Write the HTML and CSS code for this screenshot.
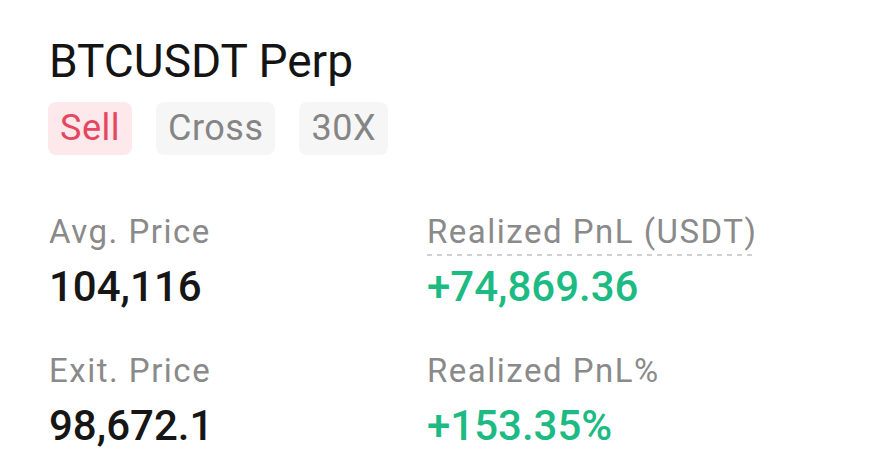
FILE: index.html
```html
<!DOCTYPE html>
<html>
<head>
<meta charset="utf-8">
<link rel="stylesheet" href="styles.css">
</head>
<body>
<div class="card">
  <h1 class="title">BTCUSDT Perp</h1>
  <div class="tags">
    <span class="tag tag-sell">Sell</span>
    <span class="tag">Cross</span>
    <span class="tag">30X</span>
  </div>
  <div class="grid">
    <div class="cell">
      <div class="label">Avg. Price</div>
      <div class="value">104,116</div>
    </div>
    <div class="cell">
      <div class="label"><span class="dashed">Realized PnL (USDT)</span></div>
      <div class="value green">+74,869.36</div>
    </div>
    <div class="cell">
      <div class="label">Exit. Price</div>
      <div class="value">98,672.1</div>
    </div>
    <div class="cell">
      <div class="label">Realized PnL%</div>
      <div class="value green">+153.35%</div>
    </div>
  </div>
</div>
</body>
</html>
```
FILE: styles.css
```css
html, body {
  margin: 0;
  padding: 0;
  background: #ffffff;
}
body {
  font-family: Roboto, "Noto Sans", sans-serif;
  width: 878px;
  height: 466px;
  overflow: hidden;
}
.card {
  padding: 31px 0 0 49px;
}
.title {
  margin: 0;
  font-size: 46px;
  font-weight: 400;
  line-height: 60px;
  color: #141414;
}
.tags {
  display: flex;
  gap: 24px;
  margin-top: 11px;
  margin-left: -1px;
}
.tag {
  display: inline-block;
  height: 53px;
  line-height: 53px;
  padding: 0 12px;
  border-radius: 8px;
  background: #f6f6f6;
  color: #858585;
  font-size: 36px;
  letter-spacing: 0.5px;
}
.tag-sell {
  background: #fde8ec;
  color: #e5475f;
}
.grid {
  display: grid;
  grid-template-columns: 378px 1fr;
  row-gap: 38px;
  margin-top: 57px;
}
.label {
  font-size: 33px;
  line-height: 40px;
  letter-spacing: 1.5px;
  color: #8a8a8a;
}
.dashed {
  padding-bottom: 5px;
  background-image: linear-gradient(to right, #d0d0d0 50%, transparent 50%);
  background-size: 10px 2px;
  background-repeat: repeat-x;
  background-position: left bottom;
}
.value {
  font-size: 42px;
  line-height: 52px;
  font-weight: 500;
  color: #161616;
  margin-top: 9px;
}
.green {
  color: #1dbb83;
}
```
